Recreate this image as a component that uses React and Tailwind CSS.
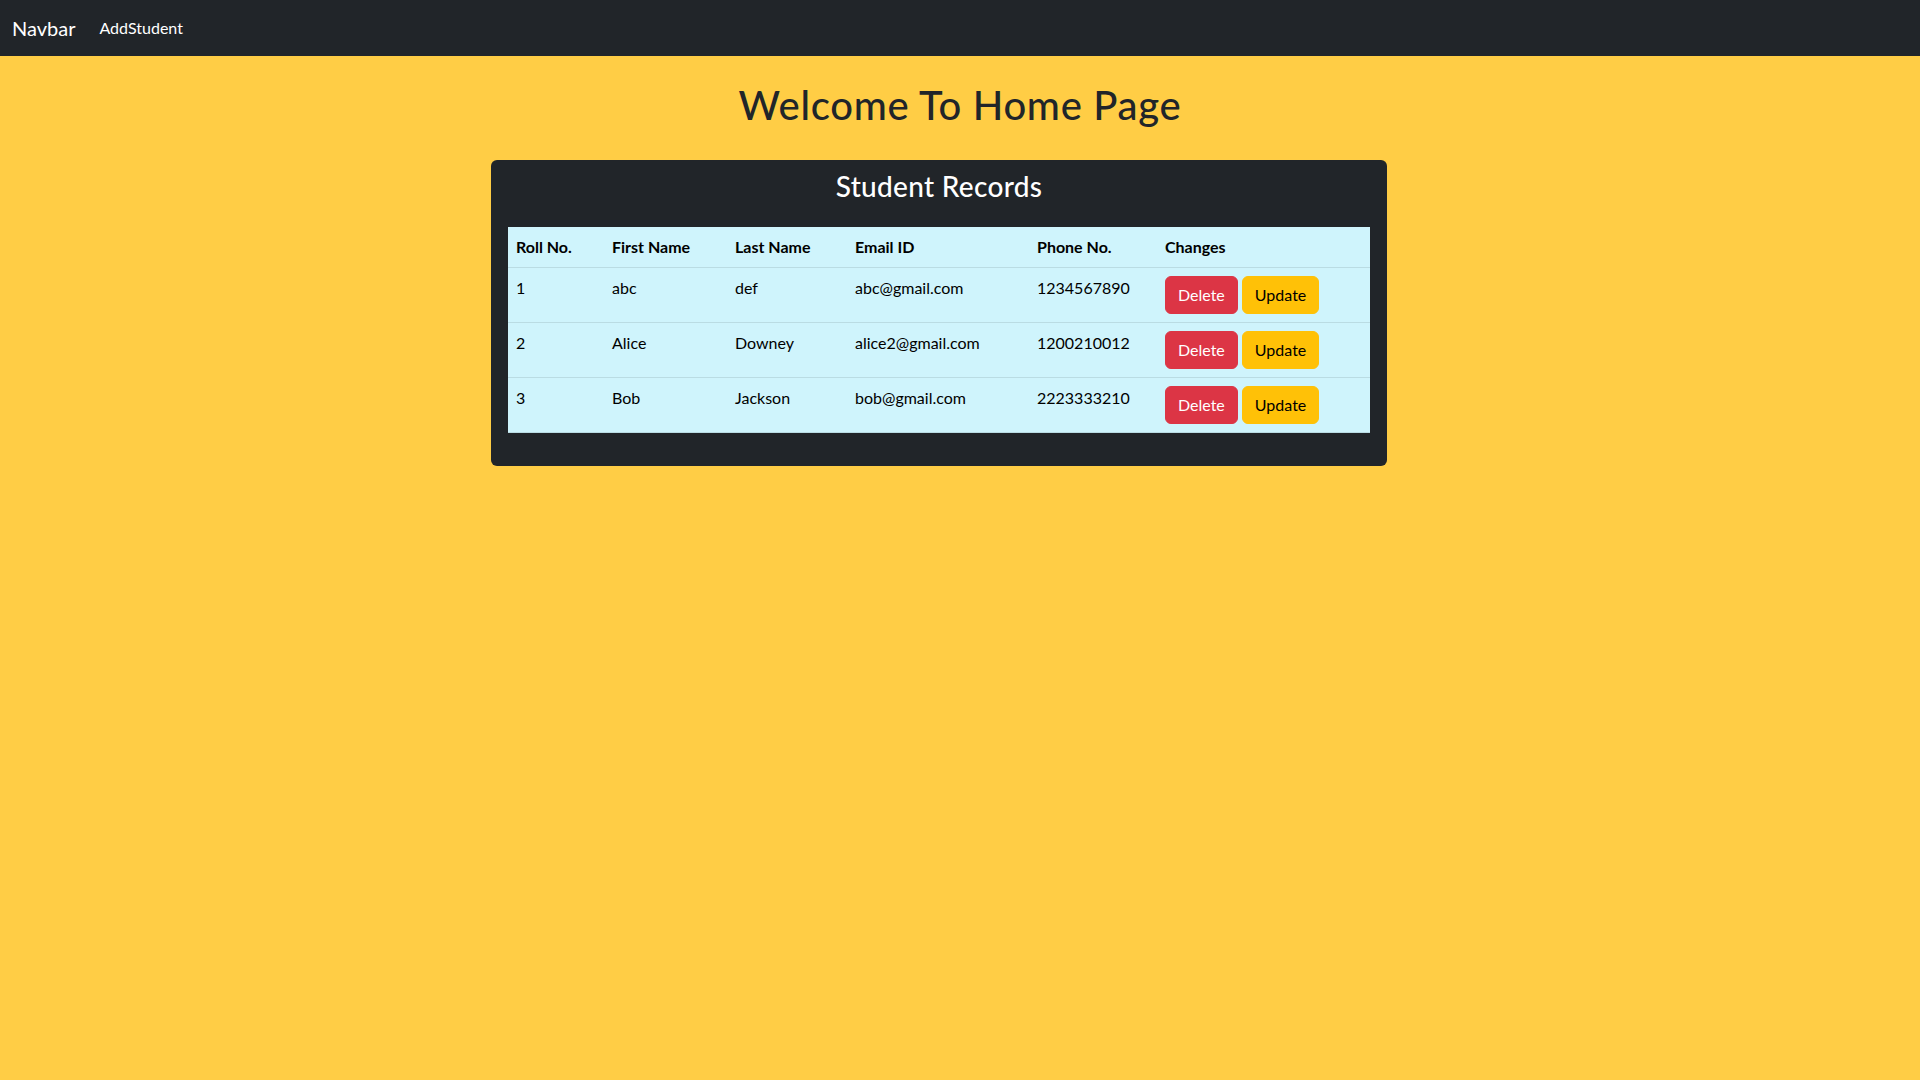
const STUDENTS = [
  { roll: 1, first: 'abc', last: 'def', email: 'abc@gmail.com', phone: '1234567890' },
  { roll: 2, first: 'Alice', last: 'Downey', email: 'alice2@gmail.com', phone: '1200210012' },
  { roll: 3, first: 'Bob', last: 'Jackson', email: 'bob@gmail.com', phone: '2223333210' },
];

const COLUMNS = ['Roll No.', 'First Name', 'Last Name', 'Email ID', 'Phone No.', 'Changes'];
const WIDTHS = ['w-[96px]', 'w-[123px]', 'w-[120px]', 'w-[182px]', 'w-[128px]', 'w-[213px]'];

const Navbar = () => (
  <nav className="h-14 bg-[#212529] flex items-center px-3">
    <a href="#" className="text-xl leading-[30px] py-[5px] mr-4 text-white">Navbar</a>
    <a href="#" className="text-base leading-6 px-2 text-white">AddStudent</a>
  </nav>
);

const App = () => {
  return (
    <div className="min-h-screen bg-[#ffcd45] font-['Lato','Liberation_Sans',sans-serif] text-[#212529]">
      <Navbar />

      <h1 className="text-center text-[40px] leading-[1.2] font-medium tracking-[0.7px] mt-[25px] mb-[31px]">
        Welcome To Home Page
      </h1>

      <div className="ml-[491px] w-[896px] bg-[#212529] rounded-md px-[17px] pt-[10px] pb-[33px]">
        <h3 className="text-center text-[28px] leading-[1.2] font-medium text-white tracking-[0.3px] mb-[23px]">
          Student Records
        </h3>

        <table className="w-full table-fixed border-collapse bg-[#cff4fc] text-black text-base leading-6">
          <colgroup>
            {WIDTHS.map((w, i) => <col key={i} className={w} />)}
          </colgroup>
          <thead>
            <tr>
              {COLUMNS.map((c) => (
                <th key={c} className="text-left font-bold p-2 border-b border-[#badce3] align-top">{c}</th>
              ))}
            </tr>
          </thead>
          <tbody>
            {STUDENTS.map((s) => (
              <tr key={s.roll}>
                <td className="p-2 border-b border-[#badce3] align-top">{s.roll}</td>
                <td className="p-2 border-b border-[#badce3] align-top">{s.first}</td>
                <td className="p-2 border-b border-[#badce3] align-top">{s.last}</td>
                <td className="p-2 border-b border-[#badce3] align-top">{s.email}</td>
                <td className="p-2 border-b border-[#badce3] align-top">{s.phone}</td>
                <td className="p-2 border-b border-[#badce3] align-top">
                  <div className="flex gap-1">
                    <button className="bg-[#dc3545] text-white border border-[#dc3545] rounded-md px-3 py-1.5 leading-6">
                      Delete
                    </button>
                    <button className="bg-[#ffc107] text-black border border-[#ffc107] rounded-md px-3 py-1.5 leading-6">
                      Update
                    </button>
                  </div>
                </td>
              </tr>
            ))}
          </tbody>
        </table>
      </div>
    </div>
  );
};

export default App;
